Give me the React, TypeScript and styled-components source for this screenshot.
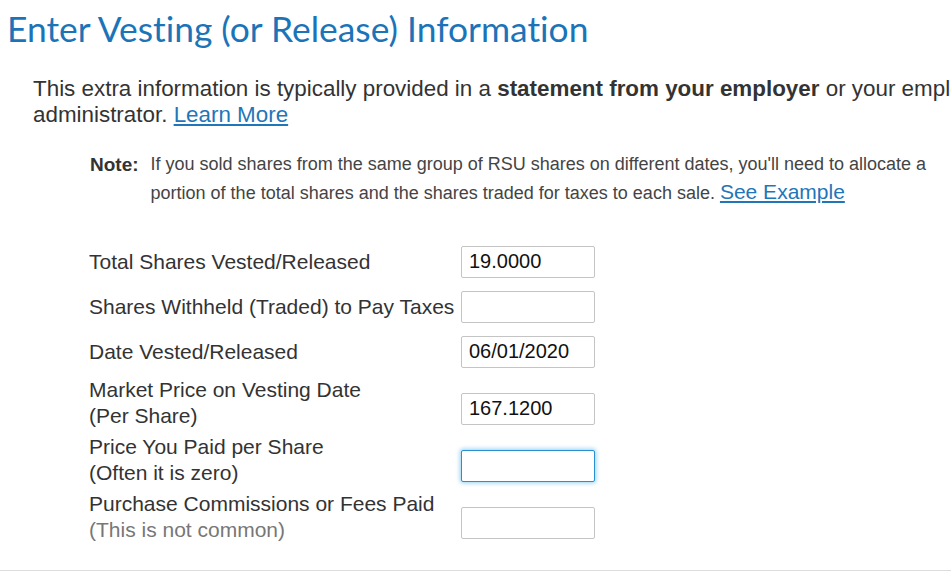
import styled, { createGlobalStyle } from "styled-components";

const GlobalStyle = createGlobalStyle`
  html, body {
    margin: 0;
    padding: 0;
    background: #ffffff;
    overflow: hidden;
  }
  body {
    font-family: "Liberation Sans", Arial, sans-serif;
    color: #333333;
  }
`;

const Page = styled.div`
  width: 951px;
  height: 572px;
  overflow: hidden;
  display: flex;
  flex-direction: column;
`;

const Heading = styled.h1`
  margin: 0;
  padding: 9px 0 0 7px;
  font-family: Lato, "Open Sans", sans-serif;
  font-weight: 400;
  font-size: 35.4px;
  line-height: 40px;
  height: 40px;
  color: #1b74b8;
  white-space: nowrap;
  font-variant-ligatures: none;
`;

const Intro = styled.p`
  margin: 27px 0 0 33px;
  width: 1150px;
  font-size: 22.4px;
  line-height: 26px;
  color: #333333;

  b {
    font-weight: 700;
  }
`;

const Link = styled.a<{ size?: number }>`
  color: #1f76b9;
  text-decoration: underline;
  font-size: ${(p) => (p.size ? `${p.size}px` : "inherit")};
  line-height: 1;
  cursor: pointer;
`;

const NoteBox = styled.div`
  display: flex;
  margin: 22px 0 0 90px;
  padding-right: 10px;
`;

const NoteLabel = styled.span`
  font-weight: 700;
  font-size: 19px;
  line-height: 29px;
  margin-right: 12px;
  flex-shrink: 0;
`;

const NoteText = styled.span`
  font-size: 18px;
  line-height: 29px;
  color: #444444;
`;

const Form = styled.div`
  display: flex;
  flex-direction: column;
  margin: 31px 0 0 89px;
`;

const Row = styled.div<{ tall?: boolean }>`
  display: flex;
  align-items: center;
  height: ${(p) => (p.tall ? 57 : 45)}px;
`;

const Label = styled.div`
  width: 371px;
  font-size: 21px;
  line-height: 26px;
  color: #333333;
  white-space: nowrap;
`;

const Hint = styled.span`
  color: #777777;
`;

const Input = styled.input<{ tall?: boolean; focused?: boolean }>`
  box-sizing: border-box;
  width: 134px;
  height: 32px;
  margin: ${(p) => (p.tall ? "12px 0 0 1px" : "0 0 0 1px")};
  padding: 0 7px;
  font-family: "Liberation Sans", Arial, sans-serif;
  font-size: 20px;
  color: #111111;
  background: #ffffff;
  border: 1px solid ${(p) => (p.focused ? "#2a8fcf" : "#c4c4c4")};
  border-radius: 2px;
  box-shadow: ${(p) =>
    p.focused ? "0 0 4px 1px rgba(60, 170, 230, 0.55)" : "none"};
  outline: none;
`;

const Divider = styled.div`
  margin-top: 25px;
  height: 1px;
  flex-shrink: 0;
  background: #dddddd;
`;

const rows = [
  { label: "Total Shares Vested/Released", value: "19.0000" },
  { label: "Shares Withheld (Traded) to Pay Taxes", value: "" },
  { label: "Date Vested/Released", value: "06/01/2020" },
  { label: "Market Price on Vesting Date", sub: "(Per Share)", value: "167.1200" },
  { label: "Price You Paid per Share", sub: "(Often it is zero)", value: "", focused: true },
  { label: "Purchase Commissions or Fees Paid", sub: "(This is not common)", value: "", hint: true },
];

function App() {
  return (
    <Page>
      <GlobalStyle />
      <Heading>Enter Vesting (or Release) Information</Heading>
      <Intro>
        This extra information is typically provided in a{" "}
        <b>statement from your employer</b> or your employee stock plan
        administrator. <Link>Learn More</Link>
      </Intro>
      <NoteBox>
        <NoteLabel>Note:</NoteLabel>
        <NoteText>
          If you sold shares from the same group of RSU shares on different
          dates, you'll need to allocate a portion of the total shares and the
          shares traded for taxes to each sale. <Link size={21}>See Example</Link>
        </NoteText>
      </NoteBox>
      <Form>
        {rows.map((r) => (
          <Row key={r.label} tall={!!r.sub}>
            <Label>
              {r.label}
              {r.sub && (
                <>
                  <br />
                  {r.hint ? <Hint>{r.sub}</Hint> : r.sub}
                </>
              )}
            </Label>
            <Input
              tall={!!r.sub}
              focused={r.focused}
              defaultValue={r.value}
              readOnly
            />
          </Row>
        ))}
      </Form>
      <Divider />
    </Page>
  );
}

export default App;
